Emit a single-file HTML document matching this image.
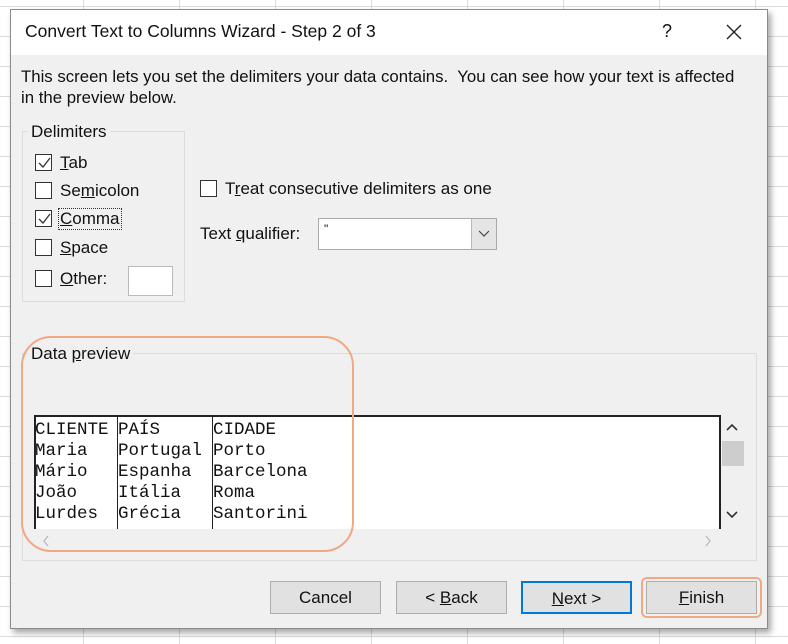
<!DOCTYPE html>
<html><head><meta charset="utf-8"><style>
*{margin:0;padding:0;box-sizing:border-box}
body{width:788px;height:644px;position:relative;overflow:hidden;background:#fff;font-family:"Liberation Sans",sans-serif;color:#111;font-size:17px}
.a{position:absolute}
.grid{position:absolute;inset:0;background-image:linear-gradient(#dcdcdc 1px,transparent 1px),linear-gradient(90deg,#dcdcdc 1px,transparent 1px);background-size:96px 30px;background-position:-13px 6px}
.dlg{left:10px;top:9px;width:758px;height:620px;background:#f0f0f0;border:1px solid #8a8a8a;box-shadow:3px 4px 6px rgba(0,0,0,.35)}
.tb{left:0;top:0;width:756px;height:45px;background:#fff}
.cb{width:17px;height:17px;border:1px solid #333;background:#fff}
.u{text-decoration:underline}
.btn{height:33px;width:111px;border:1px solid #adadad;background:#e1e1e1;text-align:center;line-height:31px;font-size:17px}
.mono{font-family:"Liberation Mono",monospace;font-size:17.5px;line-height:21px;white-space:pre;letter-spacing:0}
</style></head><body>
<div class="grid"></div>
<div class="a dlg">
 <div class="a tb"></div>
 <div class="a" style="left:14px;top:11px;font-size:17.5px">Convert Text to Columns Wizard - Step 2 of 3</div>
 <div class="a" style="left:651px;top:11px;font-size:18px">?</div>
 <svg class="a" style="left:715px;top:14px" width="16" height="16"><path d="M1 1L15 15M15 1L1 15" stroke="#222" stroke-width="1.4"/></svg>
 <div class="a" style="left:10px;top:56px;line-height:21px;font-size:16.8px;white-space:nowrap">This screen lets you set the delimiters your data contains.&nbsp; You can see how your text is affected<br>in the preview below.</div>

 <div class="a" style="left:11px;top:121px;width:163px;height:171px;border:1px solid #dcdcdc"></div>
 <div class="a" style="left:17px;top:112px;background:#f0f0f0;padding:0 3px">Delimiters</div>
 <div class="a cb" style="left:24px;top:144px"></div><svg class="a" style="left:26px;top:146px" width="14" height="14"><path d="M2 7L6 11L13 2" stroke="#333" fill="none" stroke-width="1.3"/></svg>
 <div class="a" style="left:49px;top:143px"><span class="u">T</span>ab</div>
 <div class="a cb" style="left:24px;top:172px"></div><div class="a" style="left:49px;top:171px">Se<span class="u">m</span>icolon</div>
 <div class="a cb" style="left:24px;top:200px"></div><svg class="a" style="left:26px;top:202px" width="14" height="14"><path d="M2 7L6 11L13 2" stroke="#333" fill="none" stroke-width="1.3"/></svg>
 <div class="a" style="left:47px;top:198px;border:1px dotted #333;padding:0 1px"><span class="u">C</span>omma</div>
 <div class="a cb" style="left:24px;top:229px"></div><div class="a" style="left:49px;top:228px"><span class="u">S</span>pace</div>
 <div class="a cb" style="left:24px;top:260px"></div><div class="a" style="left:49px;top:259px"><span class="u">O</span>ther:</div>
 <div class="a" style="left:117px;top:256px;width:45px;height:30px;background:#fff;border:1px solid #bbb"></div>

 <div class="a cb" style="left:189px;top:170px"></div><div class="a" style="left:214px;top:169px">T<span class="u">r</span>eat consecutive delimiters as one</div>
 <div class="a" style="left:189px;top:214px">Text <span class="u">q</span>ualifier:</div>
 <div class="a" style="left:307px;top:208px;width:179px;height:32px;background:#fff;border:1px solid #aaa"></div>
 <div class="a" style="left:313px;top:212px;font-size:12px">"</div>
 <div class="a" style="left:460px;top:209px;width:25px;height:30px;background:#e5e5e5;border-left:1px solid #bbb"></div>
 <svg class="a" style="left:466px;top:219px" width="14" height="10"><path d="M2 2L7 7L12 2" stroke="#444" fill="none" stroke-width="1.2"/></svg>

 <div class="a" style="left:11px;top:343px;width:735px;height:208px;border:1px solid #dcdcdc"></div>
 <div class="a" style="left:17px;top:334px;background:#f0f0f0;padding:0 3px">Data <span class="u">p</span>review</div>
 <div class="a" style="left:23px;top:405px;width:687px;height:114px;background:#fff;border-top:2px solid #222;border-left:2px solid #222;border-right:2px solid #222"></div>
 <div class="a" style="left:106px;top:405px;width:1px;height:114px;background:#222"></div>
 <div class="a" style="left:201px;top:405px;width:1px;height:114px;background:#222"></div>
 <div class="a mono" style="left:24px;top:410px">CLIENTE
Maria
Mário
João
Lurdes</div>
 <div class="a mono" style="left:107px;top:410px">PAÍS
Portugal
Espanha
Itália
Grécia</div>
 <div class="a mono" style="left:202px;top:410px">CIDADE
Porto
Barcelona
Roma
Santorini</div>
 <div class="a" style="left:711px;top:431px;width:22px;height:25px;background:#cdcdcd"></div>
 <svg class="a" style="left:714px;top:412px" width="14" height="10"><path d="M2 8L7 3L12 8" stroke="#333" fill="none" stroke-width="1.6"/></svg>
 <svg class="a" style="left:714px;top:500px" width="14" height="10"><path d="M2 2L7 7L12 2" stroke="#333" fill="none" stroke-width="1.6"/></svg>
 <svg class="a" style="left:30px;top:524px" width="10" height="14"><path d="M7 2L3 7L7 12" stroke="#bbb" fill="none" stroke-width="1.4"/></svg>
 <svg class="a" style="left:692px;top:524px" width="10" height="14"><path d="M3 2L7 7L3 12" stroke="#bbb" fill="none" stroke-width="1.4"/></svg>
 <div class="a" style="left:10px;top:326px;width:333px;height:216px;border:2px solid #f2a882;border-radius:30px"></div>

 <div class="a btn" style="left:259px;top:571px">Cancel</div>
 <div class="a btn" style="left:385px;top:571px">&lt; <span class="u">B</span>ack</div>
 <div class="a btn" style="left:510px;top:571px;border:2px solid #0078d7"><span class="u">N</span>ext &gt;</div>
 <div class="a btn" style="left:635px;top:571px"><span class="u">F</span>inish</div>
 <div class="a" style="left:630px;top:567px;width:121px;height:41px;border:2px solid #f2a882;border-radius:6px"></div>
</div>
</body></html>
